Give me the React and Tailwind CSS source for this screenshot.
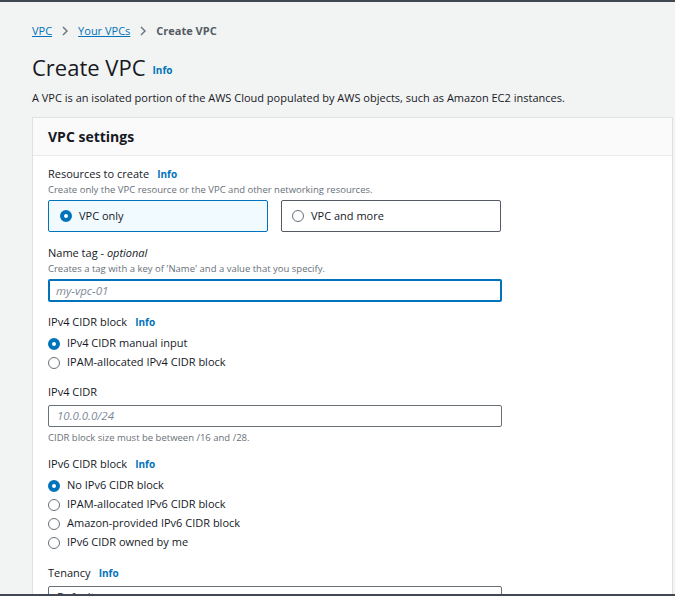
import React from "react";

const F = { fontFamily: '"Open Sans", "Noto Sans", Arial, sans-serif' };

function Radio({ checked }) {
  return checked ? (
    <span className="w-[12px] h-[12px] rounded-full border-[4px] border-[#0073bb] bg-white shrink-0 box-border" />
  ) : (
    <span className="w-[12px] h-[12px] rounded-full border border-[#687078] bg-white shrink-0 box-border" />
  );
}

function Option({ checked, children }) {
  return (
    <div className="flex items-center gap-[7px] h-[19px] text-[11px] text-[#16191f]">
      <Radio checked={checked} />
      <span>{children}</span>
    </div>
  );
}

function Label({ children, info }) {
  return (
    <div className="h-[16px] leading-[16px] text-[11px] text-[#16191f] flex items-center">
      <span>{children}</span>
      {info && <span className="ml-[8px] text-[10px] font-bold text-[#0073bb]">Info</span>}
    </div>
  );
}

function Desc({ children }) {
  return <div className="h-[14px] leading-[15px] text-[9.5px] text-[#687078]">{children}</div>;
}

export default function App() {
  return (
    <div style={F} className="w-[675px] h-[596px] overflow-hidden bg-[#f2f3f3] border-t-2 border-b-2 border-[#414750] box-border">
      <div className="pl-[32px] pt-[21px]">
        <div className="h-[16px] flex items-center text-[11px] leading-[16px]">
          <span className="text-[#0073bb] underline">VPC</span>
          <svg className="mx-[9px]" width="8" height="10" viewBox="0 0 8 10"><path d="M2 1l4 4-4 4" fill="none" stroke="#687078" strokeWidth="1.4" /></svg>
          <span className="text-[#0073bb] underline">Your VPCs</span>
          <svg className="mx-[9px]" width="8" height="10" viewBox="0 0 8 10"><path d="M2 1l4 4-4 4" fill="none" stroke="#687078" strokeWidth="1.4" /></svg>
          <span className="text-[#545b64] font-bold">Create VPC</span>
        </div>
        <div className="mt-[12px] h-[32px] flex items-center">
          <span className="text-[22px] text-[#16191f] leading-[32px]">Create VPC</span>
          <span className="ml-[7px] mt-[6px] text-[10px] font-bold text-[#0073bb]">Info</span>
        </div>
        <div className="mt-[7px] h-[16px] leading-[16px] text-[11px] text-[#16191f]">
          A VPC is an isolated portion of the AWS Cloud populated by AWS objects, such as Amazon EC2 instances.
        </div>
        <div className="mt-[11px] w-[641px] bg-white border border-[#e0e0e0] border-b-0">
          <div className="h-[38px] bg-[#fafafa] border-b border-[#eaeded] flex items-center px-[15px]">
            <span className="text-[14px] font-bold text-[#16191f] -mt-[1px]">VPC settings</span>
          </div>
          <div className="px-[15px] pt-[10px] pb-[20px]">
            <Label info>Resources to create</Label>
            <Desc>Create only the VPC resource or the VPC and other networking resources.</Desc>
            <div className="mt-[4px] flex gap-[13px]">
              <div className="w-[220px] h-[32px] border border-[#0073bb] bg-[#f1faff] rounded-[2px] flex items-center px-[11px] gap-[7px] text-[11px] text-[#16191f]">
                <Radio checked />
                <span>VPC only</span>
              </div>
              <div className="w-[220px] h-[32px] border border-[#545b64] rounded-[2px] flex items-center px-[10px] gap-[7px] text-[11px] text-[#16191f]">
                <Radio />
                <span>VPC and more</span>
              </div>
            </div>

            <div className="mt-[13px]">
              <Label>Name tag -&nbsp;<i>optional</i></Label>
              <Desc>Creates a tag with a key of 'Name' and a value that you specify.</Desc>
              <div className="mt-[4px] w-[454px] h-[23px] border-2 border-[#0073bb] rounded-[2px] flex items-center px-[6px] text-[11.5px] italic text-[#7d8998]">
                my-vpc-01
              </div>
            </div>

            <div className="mt-[12px]">
              <Label info>IPv4 CIDR block</Label>
              <div className="mt-[4px]">
                <Option checked>IPv4 CIDR manual input</Option>
                <Option>IPAM-allocated IPv4 CIDR block</Option>
              </div>
            </div>

            <div className="mt-[12px]">
              <Label>IPv4 CIDR</Label>
              <div className="mt-[5px] w-[454px] h-[22px] border border-[#687078] rounded-[2px] flex items-center px-[8px] text-[11.5px] italic text-[#7d8998]">
                10.0.0.0/24
              </div>
              <div className="mt-[3px]"><Desc>CIDR block size must be between /16 and /28.</Desc></div>
            </div>

            <div className="mt-[12px]">
              <Label info>IPv6 CIDR block</Label>
              <div className="mt-[4px]">
                <Option checked>No IPv6 CIDR block</Option>
                <Option>IPAM-allocated IPv6 CIDR block</Option>
                <Option>Amazon-provided IPv6 CIDR block</Option>
                <Option>IPv6 CIDR owned by me</Option>
              </div>
            </div>

            <div className="mt-[13px]">
              <Label info>Tenancy</Label>
              <div className="mt-[5px] w-[454px] h-[22px] border border-[#687078] rounded-[2px] flex items-center justify-between px-[8px] text-[11px] text-[#16191f]">
                <span>Default</span>
                <svg width="10" height="6" viewBox="0 0 10 6"><path d="M0 0h10L5 6z" fill="#545b64" /></svg>
              </div>
            </div>
          </div>
        </div>
      </div>
    </div>
  );
}
